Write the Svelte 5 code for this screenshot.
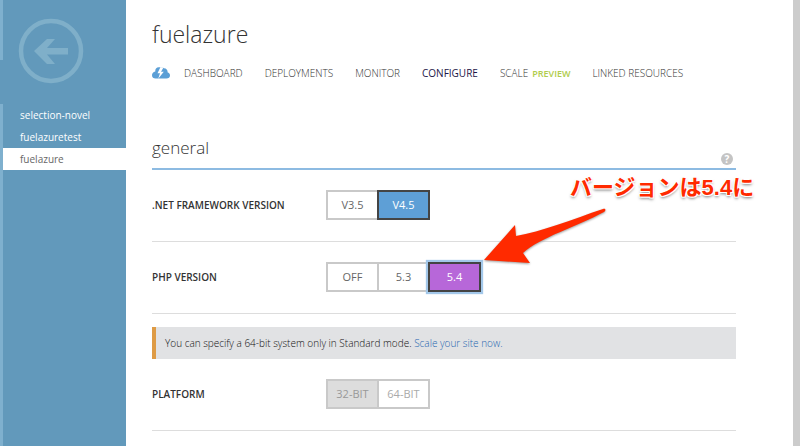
<script>
  const sites = ["selection-novel", "fuelazuretest", "fuelazure"];
  const tabs = [
    { name: "DASHBOARD" },
    { name: "DEPLOYMENTS" },
    { name: "MONITOR" },
    { name: "CONFIGURE" },
    { name: "SCALE", preview: true },
    { name: "LINKED RESOURCES" }
  ];

  let site = "fuelazure";
  let tab = "CONFIGURE";
  let net = "V4.5";
  let php = "5.4";
  let platform = "32-BIT";
</script>

<div class="portal">
  <aside>
    <div class="rail"><i></i><i></i></div>
    <div class="side">
      <button class="back" aria-label="Back">
        <svg viewBox="0 0 66 66" width="66" height="66">
          <circle cx="33" cy="33" r="30" fill="none" stroke="#7fafc9" stroke-width="4.5" />
          <path d="M16 33 L29 21 H37 L29 30 H50 V36.500 H29 L37 46 H29 Z" fill="#7fafc9" />
        </svg>
      </button>
      <nav class="sites">
        {#each sites as s}
          <a href="#{s}" class:active={s === site} on:click={() => (site = s)}>{s}</a>
        {/each}
      </nav>
    </div>
  </aside>

  <main>
    <h1>{site}</h1>

    <nav class="tabs">
      <a href="#start" class="cloud" aria-label="Quick start">
        <svg viewBox="0 0 18 12" width="18" height="12">
          <path d="M7.500 0.300 C4.500 0 3 2 3.300 4.500 C1 5 0 6.500 0 8.300 C0 10.500 1.500 11.500 3.500 11.500 H14.500 C16.500 11.500 18 10.300 18 8.500 C18 6.700 17 5.800 15.700 5.500 C15.800 3 14.300 1.300 12 1.300 C10.500 0.300 9.500 0.200 7.500 0.300 Z" fill="#5b9fd6" />
          <path d="M8.500 0 L5.500 6.300 H8 L6.200 11.800 L11.800 4.700 H9 L11.500 0.600 Z" fill="#fff" />
        </svg>
      </a>
      {#each tabs as t}
        <a href="#{t.name}" class:current={t.name === tab} on:click={() => (tab = t.name)}>
          {t.name}{#if t.preview}<small>PREVIEW</small>{/if}
        </a>
      {/each}
    </nav>

    <header>
      <h2>general</h2>
      <button class="help" aria-label="Help">?</button>
    </header>

    <div class="row">
      <span class="label" id="net-label">.NET FRAMEWORK VERSION</span>
      <div class="options" role="group" aria-labelledby="net-label">
        {#each ["V3.5", "V4.5"] as v}
          <button class:on={v === net} aria-pressed={v === net} on:click={() => (net = v)}>{v}</button>
        {/each}
      </div>
    </div>

    <div class="row">
      <span class="label" id="php-label">PHP VERSION</span>
      <div class="options changed" role="group" aria-labelledby="php-label">
        {#each ["OFF", "5.3", "5.4"] as v}
          <button class:on={v === php} aria-pressed={v === php} on:click={() => (php = v)}>{v}</button>
        {/each}
      </div>
    </div>

    <p class="notice">
      You can specify a 64-bit system only in Standard mode. <a href="#scale">Scale your site now.</a>
    </p>

    <div class="row">
      <span class="label" id="platform-label">PLATFORM</span>
      <div class="options" role="group" aria-labelledby="platform-label">
        {#each ["32-BIT", "64-BIT"] as v}
          <button disabled class:on={v === platform} aria-pressed={v === platform}>{v}</button>
        {/each}
      </div>
    </div>
  </main>

  <div class="edge"></div>

  <div class="callout">
    <span>バージョンは5.4に</span>
    <svg viewBox="0 0 130 66" width="130" height="66">
      <path d="M1 56 L32 21 L33 32 C58 28 90 15 120 5 C123 4 123 7 121 8 C95 22 56 34 40 49 L47 59 Z" fill="#ff2a00" />
    </svg>
  </div>
</div>

<style>
  :global(body) {
    margin: 0;
    background: #fff;
    font-family: "Open Sans", "Noto Sans", sans-serif;
  }

  .portal {
    position: relative;
    display: flex;
    min-height: 100vh;
    overflow: hidden;
    font-size: 11px;
    line-height: 16px;
    color: #333;
  }

  a {
    color: inherit;
    text-decoration: none;
  }

  button {
    margin: 0;
    padding: 0;
    font: inherit;
    cursor: pointer;
  }

  aside {
    display: flex;
    flex: 0 0 126px;
    background: #6299bb;
  }

  .rail {
    display: flex;
    flex-direction: column;
    gap: 44px;
    width: 3px;
  }

  .rail i {
    flex: 1;
    background: #7fb0ce;
  }

  .rail i:first-child {
    flex: 0 0 60px;
  }

  .side {
    flex: 1;
  }

  .back {
    display: block;
    margin: 18px 0 20px 15px;
    border: 0;
    background: none;
    height: 66px;
  }

  .sites a {
    display: block;
    padding: 3px 17px;
    font-family: "Open Sans", sans-serif;
    font-size: 10px;
    font-weight: 400;
    color: #fff;
  }

  .sites a.active {
    background: #fff;
    color: #666;
  }

  main {
    flex: 1;
    padding: 16px 57px 0 26px;
  }

  h1 {
    margin: 0;
    font-size: 23px;
    font-weight: 300;
    line-height: 36px;
  }

  .tabs {
    display: flex;
    align-items: center;
    margin-top: 13px;
    font-weight: 300;
    font-size: 10px;
    color: #333;
  }

  .tabs a {
    margin-right: 22px;
    white-space: nowrap;
  }

  .tabs .cloud {
    display: flex;
    margin-right: 14px;
  }

  .tabs .current {
    color: #1c1647;
    font-weight: 400;
  }

  small {
    margin-left: 4px;
    font-size: 9px;
    font-weight: 600;
    line-height: 9px;
    color: #b0cc4c;
  }

  header {
    display: flex;
    justify-content: space-between;
    align-items: flex-end;
    margin-top: 55px;
    height: 32px;
    border-bottom: 2px solid #8dbbe2;
  }

  h2 {
    margin: 0 0 8px;
    font-size: 17px;
    font-weight: 300;
    line-height: 24px;
  }

  .help {
    width: 12px;
    height: 12px;
    margin: 0 3px 3px 0;
    border: 0;
    border-radius: 50%;
    background: #c4c4c4;
    color: #fff;
    font-size: 10px;
    font-weight: 700;
    line-height: 12px;
  }

  .row {
    display: flex;
    align-items: center;
    height: 69px;
    padding-bottom: 2px;
    border-bottom: 1px solid #ddd;
  }

  .label {
    flex: 0 0 174px;
    font-size: 10px;
    font-weight: 600;
    color: #333;
  }

  .options {
    display: flex;
  }

  .options button {
    box-sizing: border-box;
    width: 53px;
    height: 30px;
    border: 2px solid #c9c9c9;
    background: #fff;
    color: #666;
    font-weight: 400;
  }

  .options button + button {
    margin-left: -2px;
  }

  .options button.on {
    position: relative;
    border-color: #444;
    background: #5e9fd6;
    color: #fff;
  }

  .options.changed button.on {
    background: #b767d9;
    box-shadow: 0 0 1px 2px #a3c8ea;
  }

  .options button:disabled {
    border-color: #c9c9c9;
    background: #fff;
    color: #aaa;
    cursor: default;
  }

  .options button.on:disabled {
    background: #ddd;
    color: #999;
  }

  .notice {
    margin: 13px 0 0;
    padding: 8px 9px;
    border-left: 4px solid #de9b45;
    background: #e1e2e4;
    font-size: 10px;
    font-weight: 300;
    color: #111;
  }

  .notice a {
    color: #1f66b0;
  }

  .edge {
    flex: 0 0 7px;
    background: #ccc;
  }

  /* annotation laid over the form */
  .callout {
    position: absolute;
    top: 172px;
    left: 483px;
    display: flex;
    flex-direction: column;
    pointer-events: none;
  }

  .callout span {
    margin-left: 87px;
    font-family: "Liberation Sans", "Noto Sans CJK JP", sans-serif;
    font-size: 22px;
    font-weight: 700;
    line-height: 32px;
    white-space: nowrap;
    color: #ff2a00;
    text-shadow: 1px 1px 0 #fff, -1px -1px 0 #fff, 1px -1px 0 #fff, -1px 1px 0 #fff, 0 2px 3px #777;
  }

  .callout svg {
    filter: drop-shadow(0 1px 1px #999);
  }
</style>
